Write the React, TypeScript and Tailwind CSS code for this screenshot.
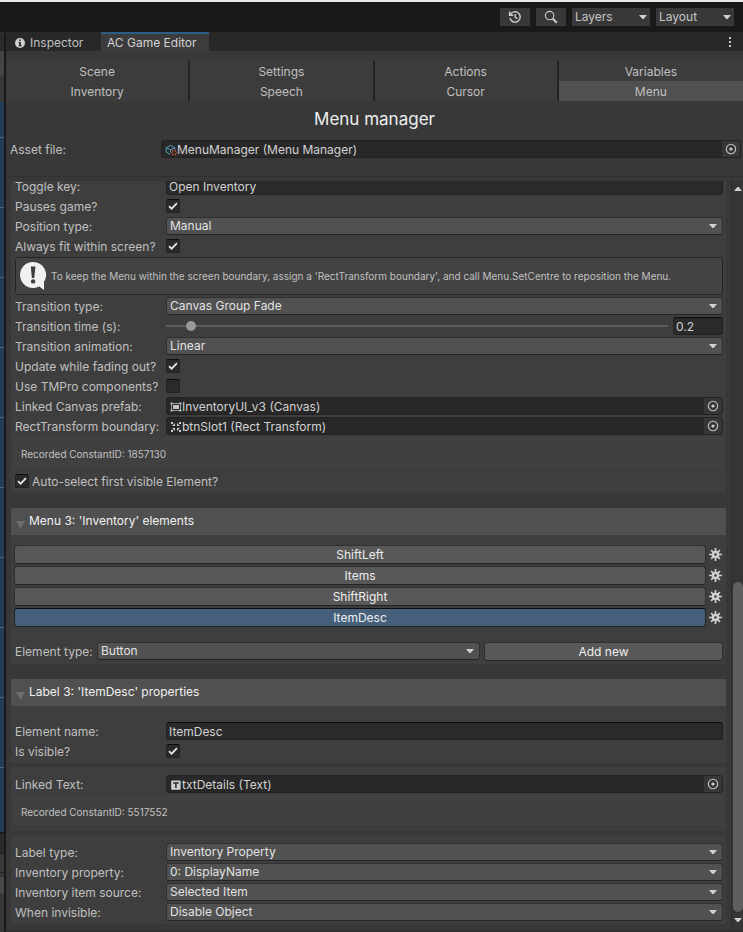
import { useId, useState } from "react";
import type { ReactNode } from "react";

function Caret({ className = "" }: { className?: string }) {
  return (
    <svg viewBox="0 0 8 4" className={`h-1 w-2 ${className}`} fill="#d0d0d0" aria-hidden="true">
      <path d="M0 0h8L4.6 4H3.4z" />
    </svg>
  );
}

function TargetIcon() {
  return (
    <svg viewBox="0 0 12 12" className="size-3" aria-hidden="true">
      <circle cx="6" cy="6" r="4.7" fill="none" stroke="#c4c4c4" strokeWidth="1.1" />
      <circle cx="6" cy="6" r="1.6" fill="#d0d0d0" />
    </svg>
  );
}

function GearIcon() {
  return (
    <svg viewBox="0 0 13 13" className="size-[13px]" aria-hidden="true">
      <g stroke="#cfcfcf" strokeWidth="1.7">
        <path d="M6.5 0v13M0 6.5h13M2.1 2.1l8.8 8.8M10.9 2.1l-8.8 8.8" />
      </g>
      <circle cx="6.5" cy="6.5" r="3.8" fill="#cfcfcf" />
      <circle cx="6.5" cy="6.5" r="1.3" fill="#3d3d3d" />
    </svg>
  );
}

function AssetIcon() {
  return (
    <svg viewBox="0 0 12 12" className="size-3" fill="none" aria-hidden="true">
      <path d="M5 10.3L1.2 8.2V3.8L5.5 1.4l4.2 2.2v2M1.2 3.8l4.3 1.9 4.2-2M5.5 5.7v3" stroke="#5d9fbf" strokeWidth="1" />
      <path d="M8.4 6.4H7.5v1.5l-.8.8.8.7V11h.9M9.8 6.4h.9v1.5l.8.8-.8.7V11h-.9" stroke="#e0562f" strokeWidth="1" />
    </svg>
  );
}

function CanvasIcon() {
  return (
    <svg viewBox="0 0 12 12" className="size-3" aria-hidden="true">
      <rect x="1.5" y="2.5" width="9" height="7" fill="none" stroke="#b8b8b8" strokeWidth="0.8" />
      <rect x="3" y="4" width="6" height="4" fill="#c4c4c4" />
      <path d="M0.6 1.6h2v1.8h-2zM9.4 1.6h2v1.8h-2zM0.6 8.6h2v1.8h-2zM9.4 8.6h2v1.8h-2z" fill="#c4c4c4" />
    </svg>
  );
}

function RectTransformIcon() {
  return (
    <svg viewBox="0 0 12 12" className="size-3" fill="#d0d0d0" aria-hidden="true">
      <path d="M1 1h2v2H1zM9 1h2v2H9zM1 9h2v2H1zM9 9h2v2H9z" />
      <path d="M5 2v3H2zM7 2v3h3zM5 10V7H2zM7 10V7h3z" />
    </svg>
  );
}

function TextIcon() {
  return (
    <svg viewBox="0 0 12 12" className="size-3" aria-hidden="true">
      <rect x="1.2" y="1.4" width="9.4" height="9.4" rx="0.8" fill="#d0d0d0" />
      <path d="M3.2 4.1h5.4M5.9 4.1v4.8" stroke="#282828" strokeWidth="1.5" />
    </svg>
  );
}

function HelpIcon() {
  return (
    <svg viewBox="0 0 28 28" className="size-7 shrink-0" aria-hidden="true">
      <path d="M13 0a13 13 0 1 0 6.3 24.4L24 28v-8A13 13 0 0 0 13 0z" fill="#f0f0f0" />
      <path d="M10.8 4.6h4.6L14.3 16h-2.4z" fill="#3c3c3c" />
      <circle cx="13.1" cy="19.4" r="2.2" fill="#3c3c3c" />
    </svg>
  );
}

function Row({ label, id, children }: { label: string; id: string; children: ReactNode }) {
  return (
    <div className="flex h-[18px]">
      <label htmlFor={id} className="w-[151px] shrink-0 leading-5 whitespace-nowrap">
        {label}
      </label>
      {children}
    </div>
  );
}

const inputStyle =
  "h-[18px] min-w-0 rounded-[3px] border border-[#212121] border-t-[#0d0d0d] bg-[#2a2a2a] px-0.5 text-xs text-[#d2d2d2] outline-none";

function TextRow({ label, value }: { label: string; value: string }) {
  const id = useId();
  return (
    <Row label={label} id={id}>
      <input id={id} type="text" defaultValue={value} className={`${inputStyle} flex-1`} />
    </Row>
  );
}

function Check({ id, checked }: { id: string; checked: boolean }) {
  const [on, setOn] = useState(checked);
  return (
    <span className="relative mt-0.5 block size-3.5 shrink-0">
      <input
        id={id}
        type="checkbox"
        checked={on}
        onChange={() => setOn(!on)}
        className="block size-3.5 appearance-none rounded-[2px] border border-[#212121] border-t-[#0d0d0d] bg-[#2a2a2a]"
      />
      {on && (
        <svg viewBox="0 0 14 14" className="pointer-events-none absolute inset-0 size-3.5" fill="none" aria-hidden="true">
          <path d="M3 7.2l2.6 2.5L11 4.2" stroke="#e8e8e8" strokeWidth="1.7" />
        </svg>
      )}
    </span>
  );
}

function CheckRow({ label, checked }: { label: string; checked: boolean }) {
  const id = useId();
  return (
    <Row label={label} id={id}>
      <Check id={id} checked={checked} />
    </Row>
  );
}

function Dropdown({ id, value }: { id: string; value: string }) {
  return (
    <span className="relative block h-[18px] min-w-0 flex-1">
      <select
        id={id}
        className="block h-[18px] w-full appearance-none rounded-[3px] border border-[#303030] border-b-[#242424] bg-[#515151] pr-5 pl-[3px] text-xs leading-4 text-[#e2e2e2]"
      >
        <option>{value}</option>
      </select>
      <Caret className="pointer-events-none absolute top-[7px] right-[6px]" />
    </span>
  );
}

function SelectRow({ label, value }: { label: string; value: string }) {
  const id = useId();
  return (
    <Row label={label} id={id}>
      <Dropdown id={id} value={value} />
    </Row>
  );
}

function ObjectField({ id, icon, value }: { id: string; icon: ReactNode; value: string }) {
  return (
    <div className="flex h-[18px] min-w-0 flex-1 items-center overflow-hidden rounded-[3px] border border-[#212121] bg-[#282828] pl-[3px]">
      <span className="shrink-0 pt-0.5">{icon}</span>
      <input
        id={id}
        type="text"
        readOnly
        value={value}
        className="h-4 min-w-0 flex-1 bg-transparent pt-px text-xs leading-[15px] text-[#d2d2d2] outline-none"
      />
      <button type="button" aria-label={`Select ${value}`} className="flex h-4 w-[18px] items-center justify-center bg-[#373737]">
        <TargetIcon />
      </button>
    </div>
  );
}

function ObjectRow({ label, icon, value }: { label: string; icon: ReactNode; value: string }) {
  const id = useId();
  return (
    <Row label={label} id={id}>
      <ObjectField id={id} icon={icon} value={value} />
    </Row>
  );
}

function SliderRow({ label }: { label: string }) {
  const id = useId();
  const [value, setValue] = useState(0.2);
  return (
    <Row label={label} id={id}>
      <input
        id={id}
        type="range"
        min={0}
        max={5}
        step={0.1}
        value={value}
        onChange={(e) => setValue(Number(e.target.value))}
        className="h-[18px] min-w-0 flex-1 appearance-none bg-transparent [&::-webkit-slider-runnable-track]:h-0.5 [&::-webkit-slider-runnable-track]:bg-[#5e5e5e] [&::-webkit-slider-thumb]:-mt-1 [&::-webkit-slider-thumb]:size-2.5 [&::-webkit-slider-thumb]:appearance-none [&::-webkit-slider-thumb]:rounded-full [&::-webkit-slider-thumb]:bg-[#999999]"
      />
      <input
        type="text"
        aria-label="Transition time value"
        value={value}
        onChange={(e) => setValue(Number(e.target.value) || 0)}
        className={`${inputStyle} ml-[5px] w-[50px]`}
      />
    </Row>
  );
}

function ConstantId({ value }: { value: string }) {
  return (
    <div className="flex h-[30px] items-center bg-[#404040] px-1.5 pt-1.5 text-[10px]">Recorded ConstantID: {value}</div>
  );
}

function SectionHeader({ title }: { title: string }) {
  return (
    <h2 className="mt-[15px] flex h-[27px] items-center bg-[#505050] pb-0.5 pl-[5px] text-xs text-[#f0f0f0]">
      <svg viewBox="0 0 9 8" className="mt-2 mr-1 h-2 w-[9px]" fill="#6c6c6c" aria-hidden="true">
        <path d="M0 0h9L4.5 8z" />
      </svg>
      {title}
    </h2>
  );
}

function ElementRow({ name, selected = false }: { name: string; selected?: boolean }) {
  return (
    <div className="flex items-center gap-[3px]">
      <button
        type="button"
        className={`h-[19px] flex-1 rounded-[3px] border text-xs leading-4 text-[#eeeeee] ${
          selected ? "border-[#242424] border-t-[#0d0d0d] bg-[#46607c]" : "border-[#303030] border-b-[#242424] bg-[#585858]"
        }`}
      >
        {name}
      </button>
      <button type="button" aria-label={`${name} options`} className="pr-px">
        <GearIcon />
      </button>
    </div>
  );
}

function ToolbarSelect({ value }: { value: string }) {
  return (
    <span className="relative block h-[18px] w-[78px]">
      <select
        aria-label={value}
        className="block h-[18px] w-full appearance-none bg-[#383838] pl-[3px] text-xs text-[#c4c4c4]"
      >
        <option>{value}</option>
      </select>
      <Caret className="pointer-events-none absolute top-[7px] right-[3px]" />
    </span>
  );
}

function NeighbourPanel() {
  return (
    <div className="flex w-1 shrink-0 flex-col bg-[#383838]">
      <div className="h-[19px] rounded-tr-[3px] bg-[#2a2a2a]" />
      <div className="h-[25px] bg-[#444444]" />
      <div className="h-[26px] bg-[#383838]" />
      <div className="flex h-[730px] flex-col bg-[#233d58] pt-[35px]">
        {Array.from({ length: 10 }, (_, i) => (
          <div key={i} className="h-[70px] shrink-0 border-t border-[#4b617b]" />
        ))}
      </div>
      <div className="h-0.5 bg-[#191919]" />
      <div className="h-[19px] rounded-tr-[3px] bg-[#2a2a2a]" />
      <div className="h-5 border-y border-[#232323] bg-[#3a3a3a]" />
      <div className="mt-1 h-4 bg-[#4a4a4a]" />
    </div>
  );
}

const pages = ["Scene", "Settings", "Actions", "Variables", "Inventory", "Speech", "Cursor", "Menu"];

export default function App() {
  const assetId = useId();
  const autoId = useId();
  const typeId = useId();
  return (
    <div className="flex h-screen flex-col overflow-hidden border-t-2 border-[#e6e8eb] bg-[#191919] font-['Inter','Liberation_Sans',sans-serif] text-xs text-[#c0c0c0]">
      <header className="flex h-[30px] shrink-0 items-center justify-end gap-1.5 pr-[9px]">
        <button type="button" aria-label="Undo history" className="flex h-[18px] w-[30px] items-center justify-center bg-[#383838]">
          <svg viewBox="0 0 14 14" className="size-3.5" fill="none" stroke="#cfcfcf" strokeWidth="1.4" aria-hidden="true">
            <path d="M2.4 4.6A5.2 5.2 0 1 1 2 8.2M1.6 1.6v3.6h3.6M7.2 4v3.4l2.2 1.2" />
          </svg>
        </button>
        <button type="button" aria-label="Search" className="flex h-[18px] w-[30px] items-center justify-center bg-[#383838]">
          <svg viewBox="0 0 14 14" className="size-3.5" fill="none" stroke="#cfcfcf" aria-hidden="true">
            <circle cx="5.6" cy="5.6" r="4.2" strokeWidth="1.1" />
            <path d="M8.8 8.8l4 4" strokeWidth="2" />
          </svg>
        </button>
        <ToolbarSelect value="Layers" />
        <ToolbarSelect value="Layout" />
      </header>

      <div className="flex min-h-0 flex-1 gap-0.5">
        <NeighbourPanel />
        <main className="flex min-w-0 flex-1 flex-col bg-[#383838]">
          <div className="flex h-[19px] shrink-0 items-stretch rounded-tl-[3px] bg-[#282828]">
            <button type="button" className="flex w-[95px] items-center gap-[5px] pt-0.5 pl-[9px]">
              <svg viewBox="0 0 10 10" className="size-2.5" aria-hidden="true">
                <circle cx="5" cy="5" r="5" fill="#d0d0d0" />
                <path d="M4.2 1.6h1.7v1.5H4.2zM3.5 4.1h2.4v3.1h.8v1H3.4v-1h.8V5.1h-.7z" fill="#282828" />
              </svg>
              Inspector
            </button>
            <button type="button" className="w-[108px] border-t-2 border-[#2c5d87] bg-[#3c3c3c] pl-1.5 text-left text-[#d2d2d2]">
              AC Game Editor
            </button>
            <button type="button" aria-label="Panel menu" className="ml-auto flex w-[26px] items-center justify-center">
              <svg viewBox="0 0 2 10" className="h-2.5 w-0.5" fill="#c8c8c8" aria-hidden="true">
                <path d="M0 0h2v2H0zM0 4h2v2H0zM0 8h2v2H0z" />
              </svg>
            </button>
          </div>

          <nav className="mt-2.5 grid shrink-0 grid-cols-4">
            {pages.map((page, i) => (
              <button
                key={page}
                type="button"
                className={`h-5 pt-0.5 leading-[18px] ${page === "Menu" ? "bg-[#505050]" : "bg-[#3c3c3c]"} ${
                  i % 4 < 3 ? "border-r-2 border-[#232323]" : ""
                }`}
              >
                {page}
              </button>
            ))}
          </nav>

          <h1 className="mt-1 text-center text-[17px] leading-7 text-[#eeeeee]">Menu manager</h1>

          <div className="mt-[7px] flex shrink-0 pr-0.5 pl-1">
            <label htmlFor={assetId} className="w-[151px] shrink-0 leading-5">
              Asset file:
            </label>
            <ObjectField id={assetId} icon={<AssetIcon />} value="MenuManager (Menu Manager)" />
          </div>

          <div className="mt-4 flex min-h-0 flex-1 flex-col border-t border-[#303030] pt-1">
            <div className="flex min-h-0 flex-1">
              <div className="min-w-0 flex-1 overflow-hidden px-[5px]">
                <section className="-mt-1 flex flex-col gap-0.5 bg-[#3e3e3e] pr-[3px] pb-[3px] pl-1">
                  <TextRow label="Toggle key:" value="Open Inventory" />
                  <CheckRow label="Pauses game?" checked />
                  <SelectRow label="Position type:" value="Manual" />
                  <CheckRow label="Always fit within screen?" checked />
                  <div className="flex h-[38px] items-center gap-[3px] rounded-[3px] border border-[#242424] bg-[#434343] pl-1 text-[10px] whitespace-nowrap">
                    <HelpIcon />
                    <p className="pt-0.5">
                      To keep the Menu within the screen boundary, assign a 'RectTransform boundary', and call
                      Menu.SetCentre to reposition the Menu.
                    </p>
                  </div>
                  <SelectRow label="Transition type:" value="Canvas Group Fade" />
                  <SliderRow label="Transition time (s):" />
                  <SelectRow label="Transition animation:" value="Linear" />
                  <CheckRow label="Update while fading out?" checked />
                  <CheckRow label="Use TMPro components?" checked={false} />
                  <ObjectRow label="Linked Canvas prefab:" icon={<CanvasIcon />} value="InventoryUI_v3 (Canvas)" />
                  <ObjectRow label="RectTransform boundary:" icon={<RectTransformIcon />} value="btnSlot1 (Rect Transform)" />
                  <ConstantId value="1857130" />
                  <div className="mt-[3px] flex h-[18px] gap-[3px]">
                    <Check id={autoId} checked />
                    <label htmlFor={autoId} className="leading-5">
                      Auto-select first visible Element?
                    </label>
                  </div>
                </section>

                <SectionHeader title="Menu 3: 'Inventory' elements" />
                <section className="flex flex-col gap-0.5 bg-[#3e3e3e] pt-2.5 pr-[3px] pb-[3px] pl-[3px]">
                  <ElementRow name="ShiftLeft" />
                  <ElementRow name="Items" />
                  <ElementRow name="ShiftRight" />
                  <ElementRow name="ItemDesc" selected />
                  <div className="mt-[13px] flex h-[19px] gap-1">
                    <label htmlFor={typeId} className="w-[79px] shrink-0 pl-px leading-5 whitespace-nowrap">
                      Element type:
                    </label>
                    <Dropdown id={typeId} value="Button" />
                    <button
                      type="button"
                      className="h-[19px] w-[239px] rounded-[3px] border border-[#303030] border-b-[#242424] bg-[#585858] text-xs leading-4 text-[#eeeeee]"
                    >
                      Add new
                    </button>
                  </div>
                </section>

                <SectionHeader title="Label 3: 'ItemDesc' properties" />
                <section className="flex flex-col gap-0.5 bg-[#3e3e3e] pt-4 pr-[3px] pb-[3px] pl-1">
                  <TextRow label="Element name:" value="ItemDesc" />
                  <CheckRow label="Is visible?" checked />
                </section>
                <section className="mt-1 flex flex-col gap-0.5 bg-[#3e3e3e] pt-2 pr-[3px] pb-1.5 pl-1">
                  <ObjectRow label="Linked Text:" icon={<TextIcon />} value="txtDetails (Text)" />
                  <ConstantId value="5517552" />
                </section>
                <section className="mt-1 flex flex-col gap-0.5 bg-[#3e3e3e] pt-2 pr-[3px] pb-[3px] pl-1">
                  <SelectRow label="Label type:" value="Inventory Property" />
                  <SelectRow label="Inventory property:" value="0: DisplayName" />
                  <SelectRow label="Inventory item source:" value="Selected Item" />
                  <SelectRow label="When invisible:" value="Disable Object" />
                </section>
              </div>

              <div className="flex w-3 shrink-0 flex-col items-center border-l border-[#2c2c2c] bg-[#353535] pt-1.5 pb-2 pl-px">
                <Caret className="rotate-180" />
                <div className="mt-[391px] mb-1.5 w-full flex-1 rounded-full bg-[#5f5f5f]" />
                <Caret />
              </div>
            </div>
            <div className="h-0.5 shrink-0 bg-[#303030]" />
          </div>
        </main>
      </div>
    </div>
  );
}
